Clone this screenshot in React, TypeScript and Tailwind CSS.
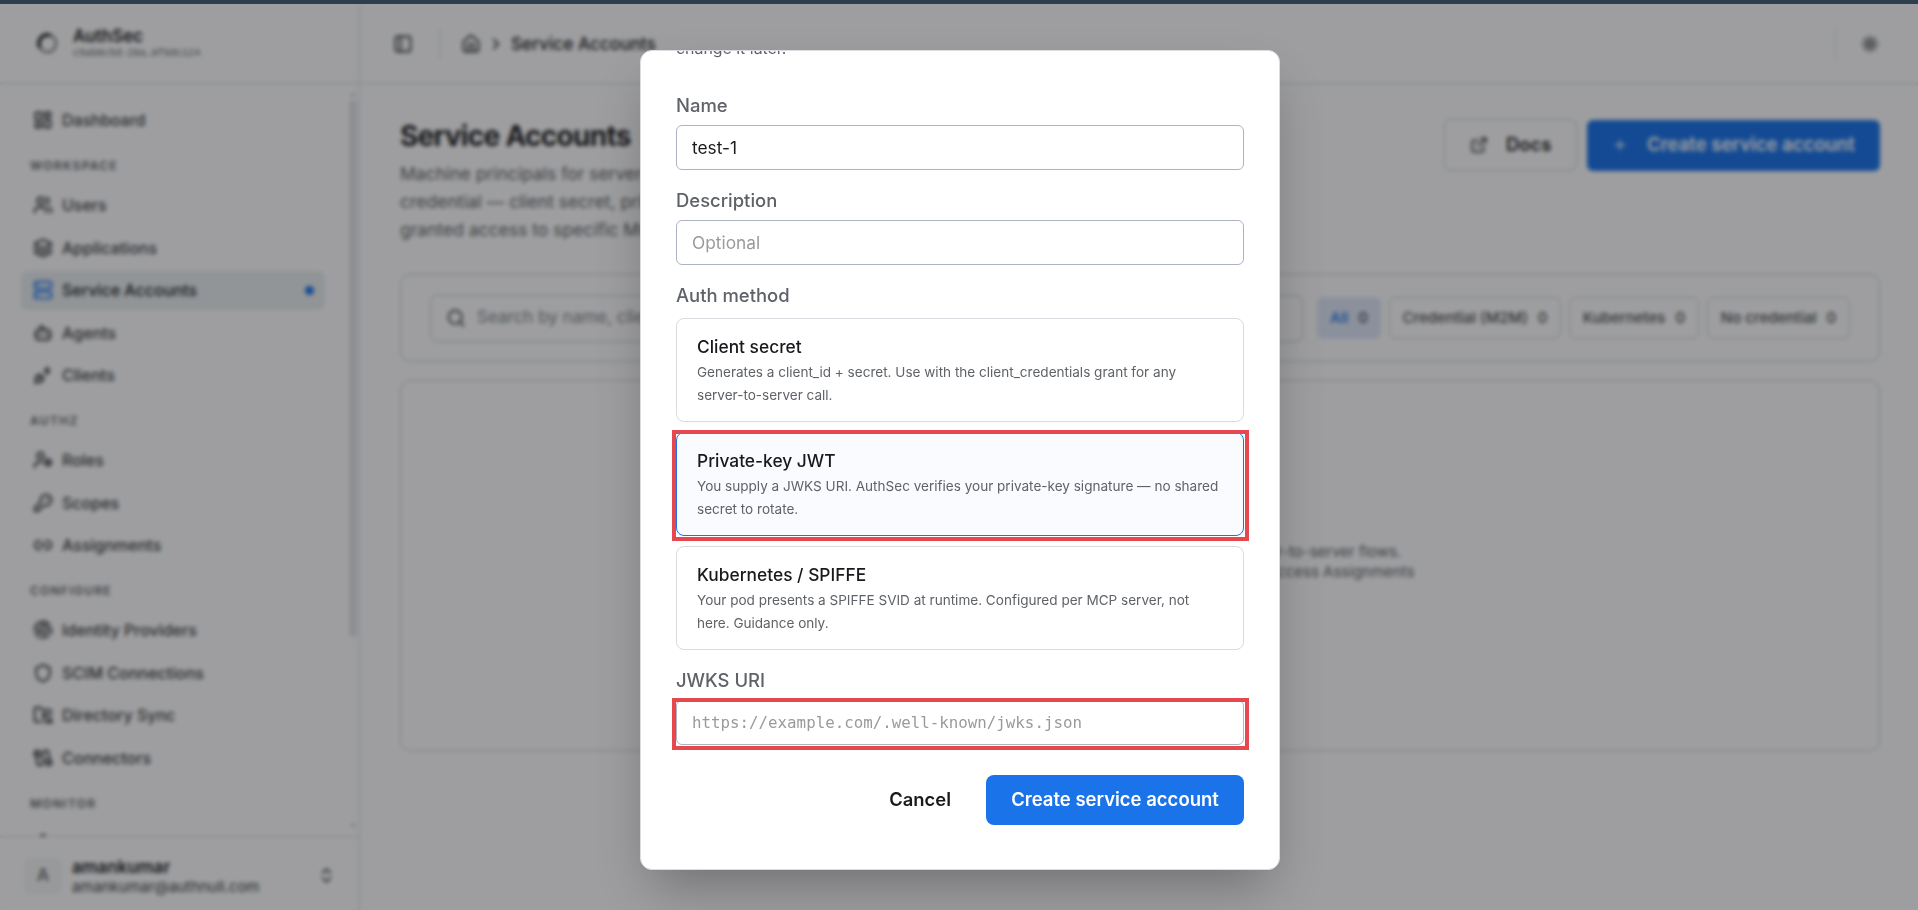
import type { ReactNode } from 'react'
import {
  Bot,
  Cable,
  ChevronRight,
  ChevronsUpDown,
  ExternalLink,
  Fingerprint,
  FolderSync,
  Home,
  KeyRound,
  Layers,
  LayoutDashboard,
  Link2,
  PanelLeft,
  PlugZap,
  Plus,
  Search,
  Server,
  Shield,
  ShieldCheck,
  Sun,
  UserCog,
  Users,
} from 'lucide-react'

const NAV = [
  { title: '', items: [{ label: 'Dashboard', icon: LayoutDashboard }] },
  {
    title: 'Workspace',
    items: [
      { label: 'Users', icon: Users },
      { label: 'Applications', icon: Layers },
      { label: 'Service Accounts', icon: Server, active: true },
      { label: 'Agents', icon: Bot },
      { label: 'Clients', icon: PlugZap },
    ],
  },
  {
    title: 'Authz',
    items: [
      { label: 'Roles', icon: UserCog },
      { label: 'Scopes', icon: KeyRound },
      { label: 'Assignments', icon: Link2 },
    ],
  },
  {
    title: 'Configure',
    items: [
      { label: 'Identity Providers', icon: Fingerprint },
      { label: 'SCIM Connections', icon: Shield },
      { label: 'Directory Sync', icon: FolderSync },
      { label: 'Connectors', icon: Cable },
    ],
  },
  { title: 'Monitor', items: [{ label: '', icon: ShieldCheck }] },
]

const FILTERS = [
  { label: 'All', width: 'w-[64px]', active: true },
  { label: 'Credential (M2M)', width: 'w-[172px]' },
  { label: 'Kubernetes', width: 'w-[130px]' },
  { label: 'No credential', width: 'w-[143px]' },
]

const METHODS = [
  {
    title: 'Client secret',
    text: 'Generates a client_id + secret. Use with the client_credentials grant for any server-to-server call.',
  },
  {
    title: 'Private-key JWT',
    text: 'You supply a JWKS URI. AuthSec verifies your private-key signature — no shared secret to rotate.',
    selected: true,
  },
  {
    title: 'Kubernetes / SPIFFE',
    text: 'Your pod presents a SPIFFE SVID at runtime. Configured per MCP server, not here. Guidance only.',
  },
]

function Sidebar() {
  return (
    <aside className="flex w-[360px] shrink-0 flex-col border-r border-[#ced2d8]">
      <div className="flex h-[80px] shrink-0 items-center border-b border-[#ced2d8] pl-9">
        <svg viewBox="0 0 24 24" className="size-[23px]" fill="none" strokeLinecap="round">
          <circle cx="12" cy="12" r="9" stroke="#80868b" strokeWidth="2.6" />
          <path d="M3.6 15.2A9 9 0 0 1 14 3.2" stroke="#202124" strokeWidth="3.6" />
        </svg>
        <div className="ml-3.5">
          <div className="text-[17px] leading-5 font-semibold text-[#202124]">AuthSec</div>
          <div className="font-['Liberation_Mono',monospace] text-[10.1px] leading-[15px] text-[#5f6368]">c5ab8c5d-29a…0f9dc124</div>
        </div>
      </div>

      <div className="flex min-h-0 flex-1 overflow-hidden">
        <nav className="w-[325px] shrink-0 pt-[17px] pl-[21px]">
          {NAV.map((group) => (
            <div key={group.title}>
              {group.title && (
                <div className="h-[46.5px] pt-[18.5px] pl-[9px] text-[12px] leading-4 font-semibold tracking-[1.3px] text-[#5f6368] uppercase">
                  {group.title}
                </div>
              )}
              <div className="flex flex-col gap-1">
                {group.items.map((item) => (
                  <NavItem key={item.label} {...item} />
                ))}
              </div>
            </div>
          ))}
        </nav>
        <div className="flex w-[34px] shrink-0 flex-col items-center justify-between py-1.5 pl-[21px]">
          <div className="size-1.5 border-x-3 border-b-4 border-x-transparent border-b-[#bdc1c6]" />
          <div className="mt-1 mb-auto h-[537px] w-2 rounded bg-[#dde0e6]" />
          <div className="size-1.5 border-x-3 border-t-4 border-x-transparent border-t-[#bdc1c6]" />
        </div>
      </div>

      <div className="flex h-[74px] shrink-0 items-center border-t border-[#ced2d8] pt-1 pr-[23px] pl-6">
        <div className="flex size-[38px] items-center justify-center rounded-lg bg-[#f1f3f4] text-[17px] font-medium text-[#5f6368]">A</div>
        <div className="ml-[10px] flex-1 pt-1">
          <div className="text-[17.2px] leading-5 font-semibold text-[#202124]">amankumar</div>
          <div className="text-[14.9px] leading-[21px] text-[#3c4043]">amankumar@authnull.com</div>
        </div>
        <ChevronsUpDown className="size-[19px] text-[#3c4043]" />
      </div>
    </aside>
  )
}

function NavItem({ label, icon: Icon, active }: { label: string; icon: typeof Bot; active?: boolean }) {
  return (
    <div className={`flex h-[38.5px] items-center rounded-md pr-[11px] pl-[12px] ${active ? 'bg-[#e6ebee]' : ''}`}>
      <Icon className={`size-5 ${active ? 'text-[#1a73e8]' : 'text-[#303336]'}`} strokeWidth={2.3} />
      <span className={`ml-[9px] flex-1 text-[16px] font-medium ${active ? 'text-[#202124]' : 'text-[#3c4043]'}`}>{label}</span>
      {active && <span className="size-[9px] rounded-full bg-[#1a73e8]" />}
    </div>
  )
}

function TopBar() {
  return (
    <header className="flex h-[80px] shrink-0 items-center border-b border-[#ced2d8] pr-[39px] pl-[33px] text-[#3c4043]">
      <PanelLeft className="size-5" strokeWidth={2.3} />
      <div className="mx-[26px] h-8 w-px bg-[#d4d7db]" />
      <Home className="-ml-[5px] size-5" strokeWidth={2.3} />
      <ChevronRight className="mx-1.5 size-[18px]" strokeWidth={2.4} />
      <span className="text-[17.2px] font-medium text-[#202124]">Service Accounts</span>
      <div className="mr-[25px] ml-auto h-8 w-px bg-[#d4d7db]" />
      <Sun className="size-[18px]" strokeWidth={2.8} />
    </header>
  )
}

function Page() {
  return (
    <main className="flex min-w-0 flex-1 flex-col">
      <TopBar />
      <div className="flex flex-col pt-[34px] pr-[38px] pl-10">
        <div className="flex h-[156px] items-start justify-between">
          <div className="w-[680px]">
            <h1 className="text-[28px] leading-9 font-bold tracking-[-0.7px] text-[#202124]">Service Accounts</h1>
            <p className="mt-1.5 text-[17.5px] leading-7 text-[#5f6368]">
              Machine principals for server-to-server calls. Each account holds one
              <br />
              credential — client secret, private-key JWT, or SPIFFE — and can be
              <br />
              granted access to specific MCP servers.
            </p>
          </div>
          <div className="flex items-center gap-2.5 pt-px">
            <button className="flex h-[52px] w-[133px] items-center gap-[18px] rounded-md border border-[#c8ccd2] pl-[25px] text-[18.4px] font-semibold text-[#202124]">
              <ExternalLink className="size-[18px]" />
              Docs
            </button>
            <button className="flex h-[51px] w-[293px] items-center gap-[19px] rounded-md bg-[#1a73e8] pl-[25px] text-[18.5px] font-semibold text-white">
              <Plus className="size-4" />
              Create service account
            </button>
          </div>
        </div>

        <div className="flex h-[88px] items-center rounded-[10px] border border-[#bfc4cb] px-[29px]">
          <div className="flex h-[47px] flex-1 items-center rounded-md border border-[#bfc4cb] pl-[15px] text-[17px] text-[#80868b]">
            <Search className="mr-[11px] size-5 text-[#4a4e52]" strokeWidth={2.3} />
            Search by name, client id, or description
          </div>
          <div className="ml-[14px] flex gap-2">
            {FILTERS.map((f) => (
              <div
                key={f.label}
                className={`flex h-[42px] items-center justify-center gap-[10px] rounded-md border text-[15px] font-medium ${f.width} ${
                  f.active ? 'border-transparent bg-[#dce5f6] text-[#1a73e8]' : 'border-[#c8ccd2] text-[#4a4e52]'
                }`}
              >
                {f.label}
                <span className="text-[#4a4e52]">0</span>
              </div>
            ))}
          </div>
        </div>

        <div className="mt-[18px] flex h-[371px] items-center justify-center rounded-[10px] border border-[#bfc4cb] pb-2 text-center text-[15px] leading-5 text-[#5f6368]">
          <p>
            Create your first service account to enable secure server-to-server flows.
            <br />
            Once it has a credential, grant access to MCP servers in Access Assignments
          </p>
        </div>
      </div>
    </main>
  )
}

function Field({ label, children }: { label: string; children: ReactNode }) {
  return (
    <div className="mb-[18px]">
      <div className="mb-2 text-[18.45px] leading-6 font-medium text-[#5f6368]">{label}</div>
      {children}
    </div>
  )
}

function Highlight() {
  return <div className="pointer-events-none absolute -top-[3px] -right-1.5 -bottom-1.5 -left-[5px] border-4 border-[#e5484d]" />
}

function CreateDialog() {
  return (
    <div className="absolute top-[50px] left-[640px] flex h-[820px] w-[640px] flex-col overflow-hidden rounded-xl border border-[#dadce0] bg-white px-[35px] shadow-[0_25px_50px_-12px_rgba(0,0,0,0.3)]">
      <p className="-mt-3.5 mb-8 text-[15.9px] leading-6 text-[#5f6368]">change it later.</p>

      <Field label="Name">
        <div className="flex h-[45px] items-center rounded-md border border-[#aeb4c2] px-[15px] text-[17.3px] text-[#17191c]">test-1</div>
      </Field>
      <Field label="Description">
        <div className="flex h-[45px] items-center rounded-md border border-[#aeb4c2] px-[15px] text-[17.3px] text-[#9a9a9a]">Optional</div>
      </Field>
      <Field label="Auth method">
        <div className="flex flex-col gap-2.5 pt-[3px]">
          {METHODS.map((m) => (
            <div
              key={m.title}
              className={`relative h-[104px] rounded-lg border px-5 pt-4 ${
                m.selected ? 'border-[#1a73e8] bg-[#fafbff]' : 'border-[#d9dbe1]'
              }`}
            >
              <div className="text-[17.35px] leading-6 font-medium text-[#17191c]">{m.title}</div>
              <div className="mt-0.5 text-[13.55px] leading-[23px] text-[#5f6368]">{m.text}</div>
              {m.selected && <Highlight />}
            </div>
          ))}
        </div>
      </Field>
      <Field label="JWKS URI">
        <div className="relative flex h-[45px] items-center rounded-md border border-[#aeb4c2] px-[15px] font-['DejaVu_Sans_Mono',monospace] text-[15.8px] text-[#9a9a9a]">
          https://example.com/.well-known/jwks.json
          <Highlight />
        </div>
      </Field>

      <div className="mt-3 flex justify-end gap-[11px]">
        <button className="h-[50px] px-6 text-[18.4px] font-semibold text-[#17191c]">Cancel</button>
        <button className="h-[50px] w-[258px] rounded-lg bg-[#1a73e8] text-[18.5px] font-semibold text-white">Create service account</button>
      </div>
    </div>
  )
}

export default function App() {
  return (
    <div className="relative h-[910px] w-[1918px] overflow-hidden bg-[#9d9e9f] font-[Inter,sans-serif]">
      <div className="flex h-full bg-[#fafbfc] pt-1">
        <Sidebar />
        <Page />
      </div>
      <div className="absolute inset-0 bg-[rgba(10,10,12,0.385)] backdrop-blur-[2px]" />
      <div className="absolute inset-x-0 top-0 h-1 bg-[#2d3f4d]" />
      <CreateDialog />
    </div>
  )
}
